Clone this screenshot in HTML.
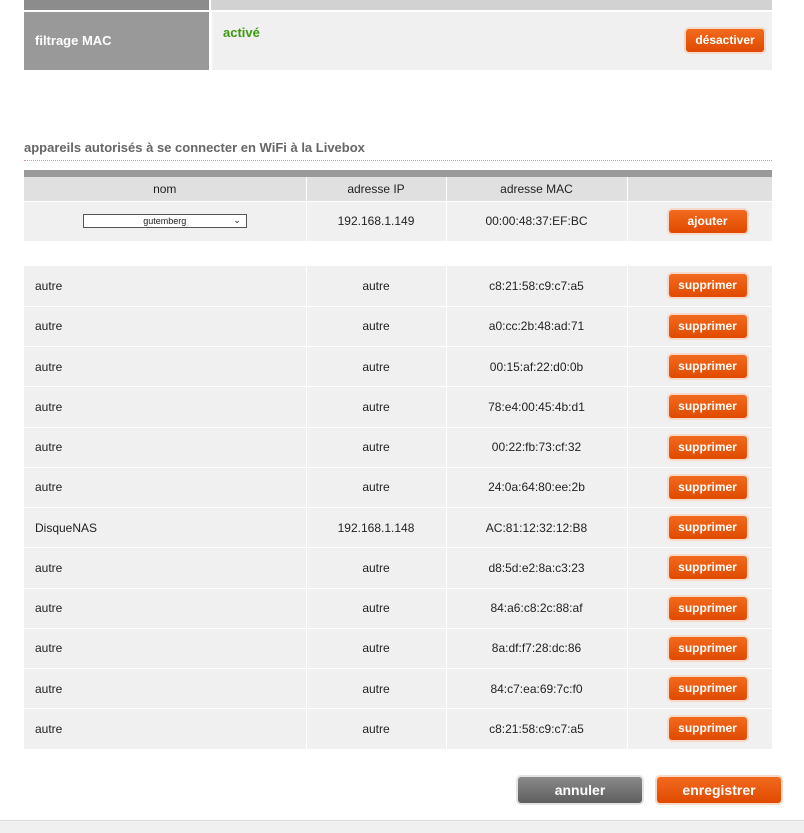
<!DOCTYPE html>
<html><head><style>
body{margin:0;width:804px;height:832px;background:#fff;font-family:"Liberation Sans",Arial,sans-serif;font-size:12px;color:#222;position:relative;overflow:hidden}
.abs{position:absolute}
.btn{position:absolute;background:linear-gradient(#f26a1e,#e04a00);color:#fff;font-weight:bold;font-size:12px;text-align:center;border-radius:3px;box-shadow:0 0 0 2px #f6d9c8;line-height:23px;height:23px}
table{position:absolute;left:24px;border-collapse:collapse;width:748px;font-size:12px}
td{height:40.25px;background:#f0f0f0;border-bottom:1px solid #fff;border-right:1px solid #fff;text-align:center;padding:0;position:relative;box-sizing:border-box}
td:first-child{text-align:left;padding-left:11px}
td:last-child{border-right:0}
</style></head><body>
<div class="abs" style="left:24px;top:0;width:185px;height:10px;background:#8c8c8c"></div>
<div class="abs" style="left:211px;top:0;width:561px;height:10px;background:#d2d2d2"></div>
<div class="abs" style="left:24px;top:12px;width:185px;height:58px;background:#999;color:#fff;font-weight:bold;font-size:13px;line-height:58px;"><span style="padding-left:11px">filtrage MAC</span></div>
<div class="abs" style="left:212px;top:12px;width:560px;height:58px;background:#f0f0f0"></div>
<div class="abs" style="left:223px;top:25px;color:#3c9a10;font-weight:bold;font-size:13px">activé</div>
<div class="btn" style="left:686px;top:29px;width:78px">désactiver</div>
<div class="abs" style="left:24px;top:140px;color:#666;font-weight:bold;font-size:13px">appareils autorisés à se connecter en WiFi à la Livebox</div>
<div class="abs" style="left:24px;top:160px;width:748px;border-top:1px dotted #e88"></div>
<div class="abs" style="left:24px;top:170px;width:748px;height:7px;background:#999"></div>
<table style="top:177px">
<tr><td style="height:24px;background:#e0e0e0;width:282px;text-align:center;padding:0">nom</td><td style="height:24px;background:#e0e0e0;width:140px">adresse IP</td><td style="height:24px;background:#e0e0e0;width:181px">adresse MAC</td><td style="height:24px;background:#e0e0e0"></td></tr>
<tr><td style="text-align:center;padding:0;height:40px"><div style="display:inline-block;width:162px;height:12px;border:1px solid #555;background:#fff;font-size:9px;line-height:12px;position:relative;vertical-align:middle">gutemberg<span style="position:absolute;right:5px;top:-1px;font-size:9px">⌄</span></div></td><td style="height:40px">192.168.1.149</td><td style="height:40px">00:00:48:37:EF:BC</td><td style="height:40px"><div class="btn" style="left:41px;top:8px;width:78px">ajouter</div></td></tr>
</table>
<table style="top:266px">
<tr><td style="width:282px">autre</td><td style="width:140px">autre</td><td style="width:181px">c8:21:58:c9:c7:a5</td><td><div class="btn" style="left:41px;top:8px;width:78px">supprimer</div></td></tr>
<tr><td>autre</td><td>autre</td><td>a0:cc:2b:48:ad:71</td><td><div class="btn" style="left:41px;top:8px;width:78px">supprimer</div></td></tr>
<tr><td>autre</td><td>autre</td><td>00:15:af:22:d0:0b</td><td><div class="btn" style="left:41px;top:8px;width:78px">supprimer</div></td></tr>
<tr><td>autre</td><td>autre</td><td>78:e4:00:45:4b:d1</td><td><div class="btn" style="left:41px;top:8px;width:78px">supprimer</div></td></tr>
<tr><td>autre</td><td>autre</td><td>00:22:fb:73:cf:32</td><td><div class="btn" style="left:41px;top:8px;width:78px">supprimer</div></td></tr>
<tr><td>autre</td><td>autre</td><td>24:0a:64:80:ee:2b</td><td><div class="btn" style="left:41px;top:8px;width:78px">supprimer</div></td></tr>
<tr><td>DisqueNAS</td><td>192.168.1.148</td><td>AC:81:12:32:12:B8</td><td><div class="btn" style="left:41px;top:8px;width:78px">supprimer</div></td></tr>
<tr><td>autre</td><td>autre</td><td>d8:5d:e2:8a:c3:23</td><td><div class="btn" style="left:41px;top:8px;width:78px">supprimer</div></td></tr>
<tr><td>autre</td><td>autre</td><td>84:a6:c8:2c:88:af</td><td><div class="btn" style="left:41px;top:8px;width:78px">supprimer</div></td></tr>
<tr><td>autre</td><td>autre</td><td>8a:df:f7:28:dc:86</td><td><div class="btn" style="left:41px;top:8px;width:78px">supprimer</div></td></tr>
<tr><td>autre</td><td>autre</td><td>84:c7:ea:69:7c:f0</td><td><div class="btn" style="left:41px;top:8px;width:78px">supprimer</div></td></tr>
<tr><td>autre</td><td>autre</td><td>c8:21:58:c9:c7:a5</td><td><div class="btn" style="left:41px;top:8px;width:78px">supprimer</div></td></tr>
</table>
<div class="btn" style="left:518px;top:777px;width:124px;height:26px;line-height:26px;font-size:14px;background:linear-gradient(#8a8a8a,#5e5e5e);box-shadow:0 0 0 2px #e4e4e4">annuler</div>
<div class="btn" style="left:657px;top:777px;width:124px;height:26px;line-height:26px;font-size:14px">enregistrer</div>
<div class="abs" style="left:0;top:820px;width:804px;height:12px;background:#f0f0f0;border-top:1px solid #d8d8d8"></div>
</body></html>
